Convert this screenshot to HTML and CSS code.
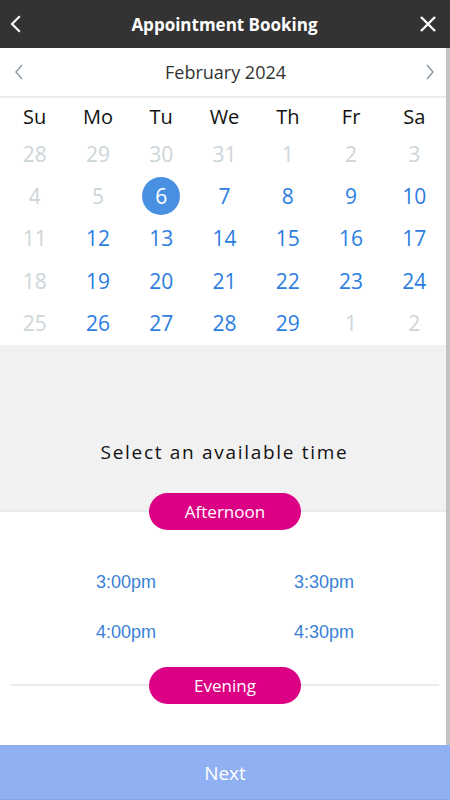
FILE: index.html
```html
<!DOCTYPE html>
<html>
<head>
<meta charset="utf-8">
<link rel="stylesheet" href="styles.css">
</head>
<body>
<div class="app">
  <header class="topbar">
    <svg class="icon back" width="14" height="20" viewBox="0 0 14 20"><path d="M10 3 L3 10 L10 17" fill="none" stroke="#fff" stroke-width="2.2" stroke-linecap="square"/></svg>
    <h1 class="title">Appointment Booking</h1>
    <svg class="icon close" width="20" height="20" viewBox="0 0 20 20"><path d="M3 3 L17 17 M17 3 L3 17" fill="none" stroke="#fff" stroke-width="2.4"/></svg>
  </header>
  <div class="main">
    <div class="content">
      <div class="monthnav">
        <svg class="chev" width="12" height="20" viewBox="0 0 12 20"><path d="M9 3 L3 10 L9 17" fill="none" stroke="#8797a3" stroke-width="1.4"/></svg>
        <span class="month">February 2024</span>
        <svg class="chev" width="12" height="20" viewBox="0 0 12 20"><path d="M3 3 L9 10 L3 17" fill="none" stroke="#8797a3" stroke-width="1.4"/></svg>
      </div>
      <div class="calendar">
        <div class="weekdays">
          <span>Su</span><span>Mo</span><span>Tu</span><span>We</span><span>Th</span><span>Fr</span><span>Sa</span>
        </div>
        <div class="days">
          <span class="off">28</span><span class="off">29</span><span class="off">30</span><span class="off">31</span><span class="off">1</span><span class="off">2</span><span class="off">3</span>
          <span class="off">4</span><span class="off">5</span><span class="sel"><b>6</b></span><span>7</span><span>8</span><span>9</span><span>10</span>
          <span class="off">11</span><span>12</span><span>13</span><span>14</span><span>15</span><span>16</span><span>17</span>
          <span class="off">18</span><span>19</span><span>20</span><span>21</span><span>22</span><span>23</span><span>24</span>
          <span class="off">25</span><span>26</span><span>27</span><span>28</span><span>29</span><span class="off">1</span><span class="off">2</span>
        </div>
      </div>
      <div class="prompt">Select an available time</div>
      <div class="divider first"><span class="pill">Afternoon</span></div>
      <div class="times">
        <span>3:00pm</span><span>3:30pm</span>
        <span>4:00pm</span><span>4:30pm</span>
      </div>
      <div class="divider"><span class="pill">Evening</span></div>
    </div>
    <div class="scrollbar"></div>
  </div>
  <button class="next">Next</button>
</div>
</body>
</html>
```
FILE: styles.css
```css
* { box-sizing: border-box; }
html, body { margin: 0; padding: 0; }
body {
  font-family: "Open Sans", "Noto Sans", sans-serif;
  background: #fff;
  width: 450px;
  height: 800px;
  overflow: hidden;
}
.app {
  display: flex;
  flex-direction: column;
  height: 800px;
}
.topbar {
  height: 48px;
  background: #333333;
  display: flex;
  align-items: center;
  justify-content: space-between;
  padding: 0 12px 0 9px;
  flex: none;
}
.title {
  margin: 0;
  color: #fff;
  font-size: 17px;
  font-weight: 700;
  position: relative;
  left: 4px;
}
.icon { display: block; }
.main {
  flex: 1;
  display: flex;
  min-height: 0;
}
.content {
  width: 446px;
  display: flex;
  flex-direction: column;
}
.scrollbar {
  width: 4px;
  background: #c2c2c2;
}
.monthnav {
  height: 50px;
  border-bottom: 2px solid #e9edf0;
  display: flex;
  align-items: center;
  justify-content: space-between;
  padding: 0 10px 0 13px;
}
.month {
  font-size: 18px;
  color: #333;
  position: relative;
  left: 1px;
}
.calendar {
  padding: 0 0 1px 3px;
}
.weekdays, .days {
  display: grid;
  grid-template-columns: repeat(7, 1fr);
  width: 443px;
  text-align: center;
}
.weekdays span {
  height: 35px;
  line-height: 37px;
  font-size: 20px;
  color: #111;
}
.days span {
  height: 42.2px;
  display: flex;
  align-items: center;
  justify-content: center;
  font-size: 21px;
  color: #2b7de0;
}
.days span.off { color: #cdd5d9; }
.days span.sel b {
  font-weight: 400;
  width: 38px;
  height: 38px;
  border-radius: 50%;
  background: #4a90e2;
  color: #fff;
  display: flex;
  align-items: center;
  justify-content: center;
}
.prompt {
  background: #f1f1f1;
  height: 148px;
  display: flex;
  align-items: flex-end;
  justify-content: center;
  padding: 0 0 28px 3px;
  font-size: 19px;
  letter-spacing: 1.7px;
  color: #111;
}
.divider {
  height: 37px;
  display: flex;
  align-items: center;
  justify-content: center;
  position: relative;
  margin: 0 7px 0 11px;
}
.divider::before {
  content: "";
  position: absolute;
  left: 0;
  right: 0;
  top: 17px;
  height: 2px;
  background: #e9edf0;
}
.divider.first {
  margin: 0;
  background: linear-gradient(#f1f1f1 0, #f1f1f1 17px, #e6ebef 17px, #e6ebef 19px, #fff 19px);
}
.divider.first::before { display: none; }
.pill {
  position: relative;
  width: 152px;
  height: 37px;
  border-radius: 19px;
  background: #dc0084;
  color: #fff;
  font-size: 17px;
  display: flex;
  align-items: center;
  justify-content: center;
}
.divider.first .pill { margin-left: 4px; }
.times {
  display: grid;
  grid-template-columns: 198px 198px;
  padding: 28px 0 9px 27px;
}
.times span {
  height: 50px;
  display: flex;
  align-items: center;
  justify-content: center;
  font-family: "Liberation Sans", Arial, sans-serif;
  font-size: 18px;
  color: #3a7fd6;
}
.next {
  flex: none;
  height: 55px;
  width: 450px;
  border: none;
  border-bottom: 1px solid #86a6e8;
  background: #8fb0f2;
  color: #fff;
  font-family: "Open Sans", sans-serif;
  font-size: 19px;
  margin: 0;
  padding: 2px 0 0;
}
```
